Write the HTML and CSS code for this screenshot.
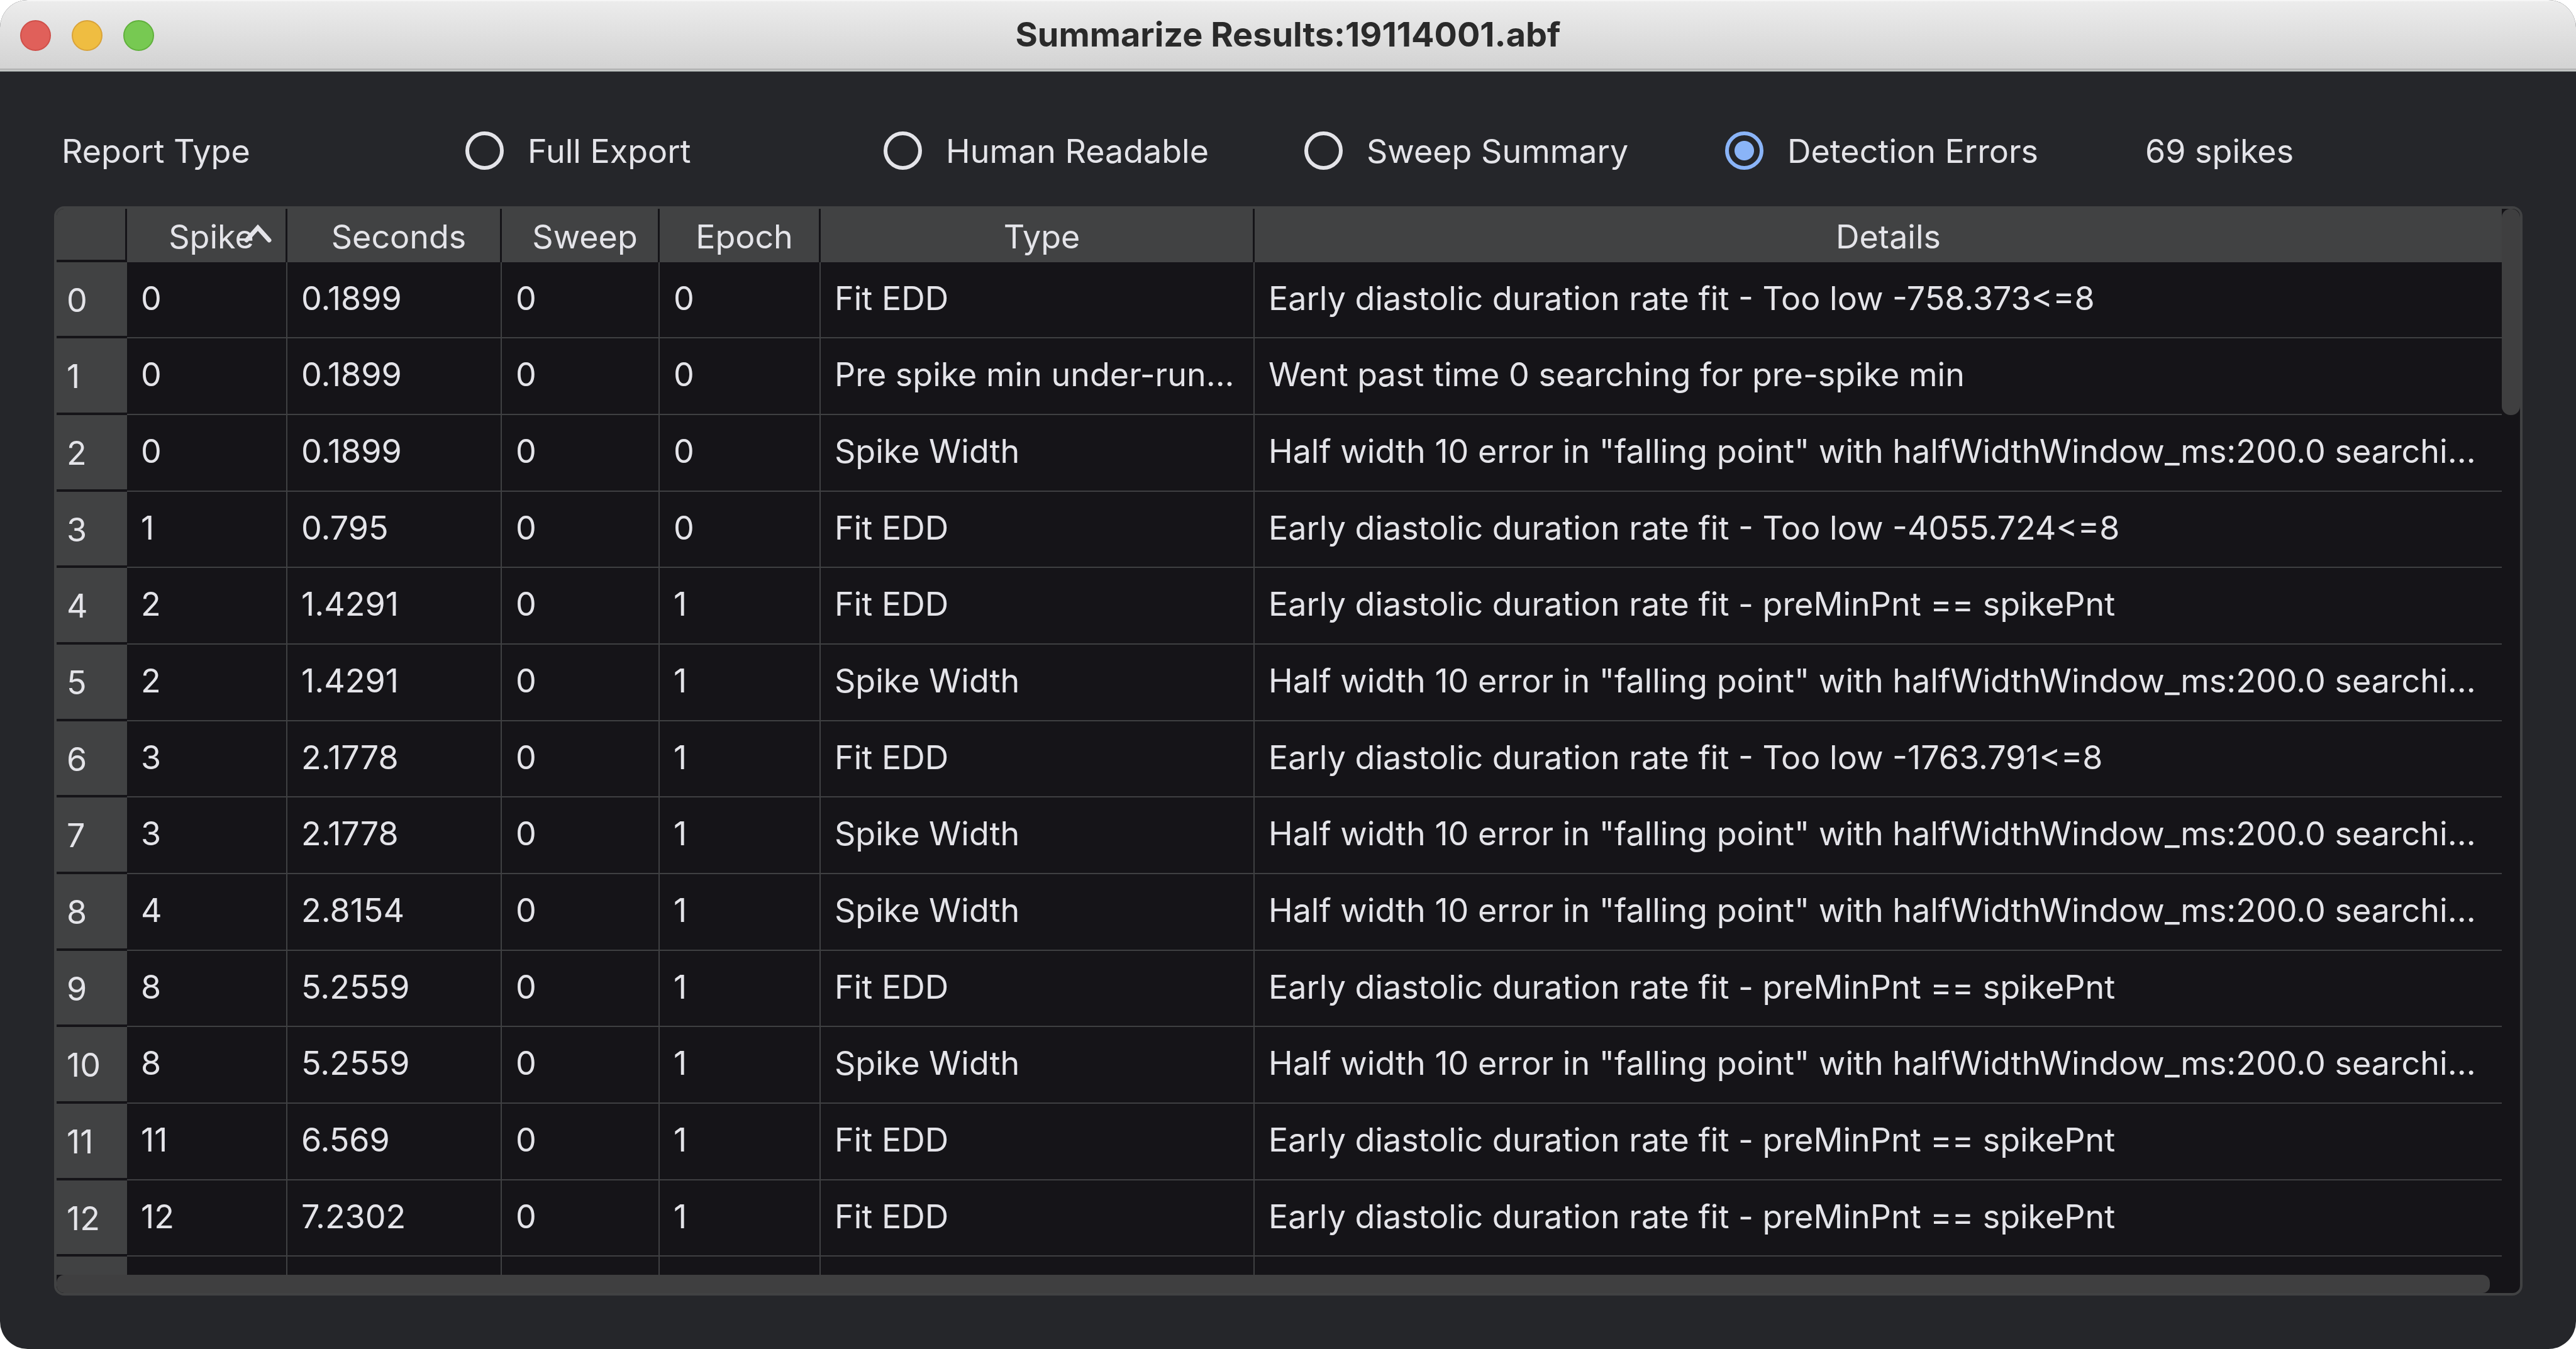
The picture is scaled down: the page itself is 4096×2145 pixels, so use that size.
FILE: index.html
```html
<!DOCTYPE html>
<html lang="en">
<head>
<meta charset="utf-8">
<title>Summarize Results:19114001.abf</title>
<link rel="stylesheet" href="styles.css">
</head>
<body>
<main class="window">
  <header class="titlebar">
    <div class="lights">
      <button class="light light-close" type="button" aria-label="Close"></button>
      <button class="light light-minimize" type="button" aria-label="Minimize"></button>
      <button class="light light-zoom" type="button" aria-label="Zoom"></button>
    </div>
    <h1 class="title">Summarize Results:19114001.abf</h1>
  </header>
  <form class="toolbar">
    <span class="caption">Report Type</span>
    <label class="option"><input class="radio" type="radio" name="report" value="full">Full Export</label>
    <label class="option"><input class="radio" type="radio" name="report" value="human">Human Readable</label>
    <label class="option"><input class="radio" type="radio" name="report" value="sweep">Sweep Summary</label>
    <label class="option"><input class="radio" type="radio" name="report" value="errors" checked>Detection Errors</label>
    <output class="count">69 spikes</output>
  </form>
  <section class="frame">
    <div class="viewport">
      <table class="grid">
        <colgroup>
          <col class="col-index"><col class="col-spike"><col class="col-seconds"><col class="col-sweep"><col class="col-epoch"><col class="col-type"><col>
        </colgroup>
        <thead>
          <tr>
            <td class="corner"></td>
            <th scope="col" aria-sort="ascending"><span class="sorted">Spike<svg class="arrow" viewBox="0 0 44 30" aria-hidden="true"><path d="M4 25 22 5l18 20"/></svg></span></th>
            <th scope="col">Seconds</th>
            <th scope="col">Sweep</th>
            <th scope="col">Epoch</th>
            <th scope="col">Type</th>
            <th scope="col">Details</th>
          </tr>
        </thead>
        <tbody>
          <tr><th scope="row">0</th><td>0</td><td>0.1899</td><td>0</td><td>0</td><td>Fit EDD</td><td>Early diastolic duration rate fit - Too low -758.373&lt;=8</td></tr>
          <tr><th scope="row">1</th><td>0</td><td>0.1899</td><td>0</td><td>0</td><td>Pre spike min under-run...</td><td>Went past time 0 searching for pre-spike min</td></tr>
          <tr><th scope="row">2</th><td>0</td><td>0.1899</td><td>0</td><td>0</td><td>Spike Width</td><td>Half width 10 error in "falling point" with halfWidthWindow_ms:200.0 searchi...</td></tr>
          <tr><th scope="row">3</th><td>1</td><td>0.795</td><td>0</td><td>0</td><td>Fit EDD</td><td>Early diastolic duration rate fit - Too low -4055.724&lt;=8</td></tr>
          <tr><th scope="row">4</th><td>2</td><td>1.4291</td><td>0</td><td>1</td><td>Fit EDD</td><td>Early diastolic duration rate fit - preMinPnt == spikePnt</td></tr>
          <tr><th scope="row">5</th><td>2</td><td>1.4291</td><td>0</td><td>1</td><td>Spike Width</td><td>Half width 10 error in "falling point" with halfWidthWindow_ms:200.0 searchi...</td></tr>
          <tr><th scope="row">6</th><td>3</td><td>2.1778</td><td>0</td><td>1</td><td>Fit EDD</td><td>Early diastolic duration rate fit - Too low -1763.791&lt;=8</td></tr>
          <tr><th scope="row">7</th><td>3</td><td>2.1778</td><td>0</td><td>1</td><td>Spike Width</td><td>Half width 10 error in "falling point" with halfWidthWindow_ms:200.0 searchi...</td></tr>
          <tr><th scope="row">8</th><td>4</td><td>2.8154</td><td>0</td><td>1</td><td>Spike Width</td><td>Half width 10 error in "falling point" with halfWidthWindow_ms:200.0 searchi...</td></tr>
          <tr><th scope="row">9</th><td>8</td><td>5.2559</td><td>0</td><td>1</td><td>Fit EDD</td><td>Early diastolic duration rate fit - preMinPnt == spikePnt</td></tr>
          <tr><th scope="row">10</th><td>8</td><td>5.2559</td><td>0</td><td>1</td><td>Spike Width</td><td>Half width 10 error in "falling point" with halfWidthWindow_ms:200.0 searchi...</td></tr>
          <tr><th scope="row">11</th><td>11</td><td>6.569</td><td>0</td><td>1</td><td>Fit EDD</td><td>Early diastolic duration rate fit - preMinPnt == spikePnt</td></tr>
          <tr><th scope="row">12</th><td>12</td><td>7.2302</td><td>0</td><td>1</td><td>Fit EDD</td><td>Early diastolic duration rate fit - preMinPnt == spikePnt</td></tr>
          <tr class="partial"><th scope="row"></th><td></td><td></td><td></td><td></td><td></td><td></td></tr>
        </tbody>
      </table>
    </div>
    <div class="vbar"><div class="vthumb"></div></div>
    <div class="hbar"><div class="hthumb"></div></div>
  </section>
</main>
</body>
</html>
```
FILE: styles.css
```css
* { box-sizing: border-box; }

body {
  margin: 0;
  background: #fff;
  font-family: Inter, "Liberation Sans", sans-serif;
  font-size: 52px;
  line-height: 64px;
  color: #e4e4e9;
}

.window {
  display: flex;
  flex-direction: column;
  min-height: 100vh;
  padding-bottom: 85px;
  border-radius: 44px;
  background: #25262a;
  overflow: hidden;
}

/* Title bar */
.titlebar {
  display: grid;
  grid-template-columns: 1fr auto 1fr;
  align-items: center;
  height: 114px;
  padding: 0 32px 2px;
  background: linear-gradient(#ececec, #d2d2d2);
  border-top: 2px solid #f6f6f6;
  border-bottom: 1px solid #8e9594;
  box-shadow: inset 0 -2px #c4c6c5, inset 0 -4px #b0b0b0;
}
.lights { display: flex; gap: 33px; }
.light {
  width: 49px;
  height: 49px;
  padding: 0;
  border: 2px solid;
  border-radius: 50%;
}
.light-close { background: #e0605a; border-color: #cf4f49; }
.light-minimize { background: #efbd41; border-color: #d9a33a; }
.light-zoom { background: #77c952; border-color: #60b03c; }
.title {
  margin: 0;
  padding-bottom: 4px;
  font-size: 54px;
  font-weight: 700;
  color: #2a2a2a;
}

/* Report type row */
.toolbar {
  display: grid;
  grid-template-columns: 642fr 665fr 669fr 669fr 668fr 598fr;
  align-items: center;
  height: 214px;
  margin: 0;
  padding: 40px 87px 0 98px;
  white-space: nowrap;
}
.option { display: flex; align-items: center; gap: 38px; }
.radio {
  appearance: none;
  width: 61px;
  height: 61px;
  margin: 0 0 4px;
  border: 6px solid #e4e4e9;
  border-radius: 50%;
}
.radio:checked {
  border-color: #8ab4f8;
  background: radial-gradient(circle, #8ab4f8 15px, transparent 16px);
}

/* Table frame: viewport plus the two scroll bars */
.frame {
  display: grid;
  grid-template-columns: minmax(0, 1fr) 29px;
  grid-template-rows: 1fr 29px;
  flex: 1;
  margin: 0 85px 0 86px;
  border: 4px solid #414243;
  border-radius: 16px;
  background: #151418;
  overflow: hidden;
}
.viewport { overflow: hidden; }
.vbar { grid-row: 1 / 3; grid-column: 2; }
.vthumb { height: 19%; border-radius: 14px; background: #3f3f40; }
.hbar { grid-row: 2; grid-column: 1; padding-right: 19px; }
.hthumb { height: 29px; border-radius: 12px; background: #3f3f40; }

.grid {
  width: 100%;
  table-layout: fixed;
  border-collapse: separate;
  border-spacing: 0;
}
.col-index { width: 112px; }
.col-spike { width: 255px; }
.col-seconds { width: 341px; }
.col-sweep { width: 251px; }
.col-epoch { width: 256px; }
.col-type { width: 690px; }

.grid th, .grid td { padding: 0; font-weight: 400; white-space: nowrap; }
.grid thead th, .corner {
  height: 85px;
  background: #414243;
  border-right: 3px solid #151418;
}
.grid thead th { padding: 4px 0 0 16px; text-align: center; }
.grid thead th:last-child { padding-left: 32px; border-right: 0; }
.corner { border-bottom: 4px solid #151418; }
.sorted { position: relative; }
.arrow {
  position: absolute;
  right: -28px;
  top: 12px;
  width: 44px;
  height: 30px;
  fill: none;
  stroke: #e4e4e9;
  stroke-width: 7;
  stroke-linecap: round;
}

.grid tbody tr { height: 122px; }
.grid tbody tr:nth-child(3n+1) { height: 121px; }
.grid tbody .partial { height: 29px; }
.grid tbody td {
  padding: 0 0 4px 22px;
  border-right: 2px solid #3f4042;
  border-bottom: 2px solid #3f4042;
}
.grid tbody td:last-child { border-right: 0; }
.grid tbody th {
  padding: 4px 0 0 16px;
  text-align: left;
  background: #414243;
  border-bottom: 4px solid #151418;
}
.grid .partial th, .grid tbody .partial td { border-bottom: 0; }
```
